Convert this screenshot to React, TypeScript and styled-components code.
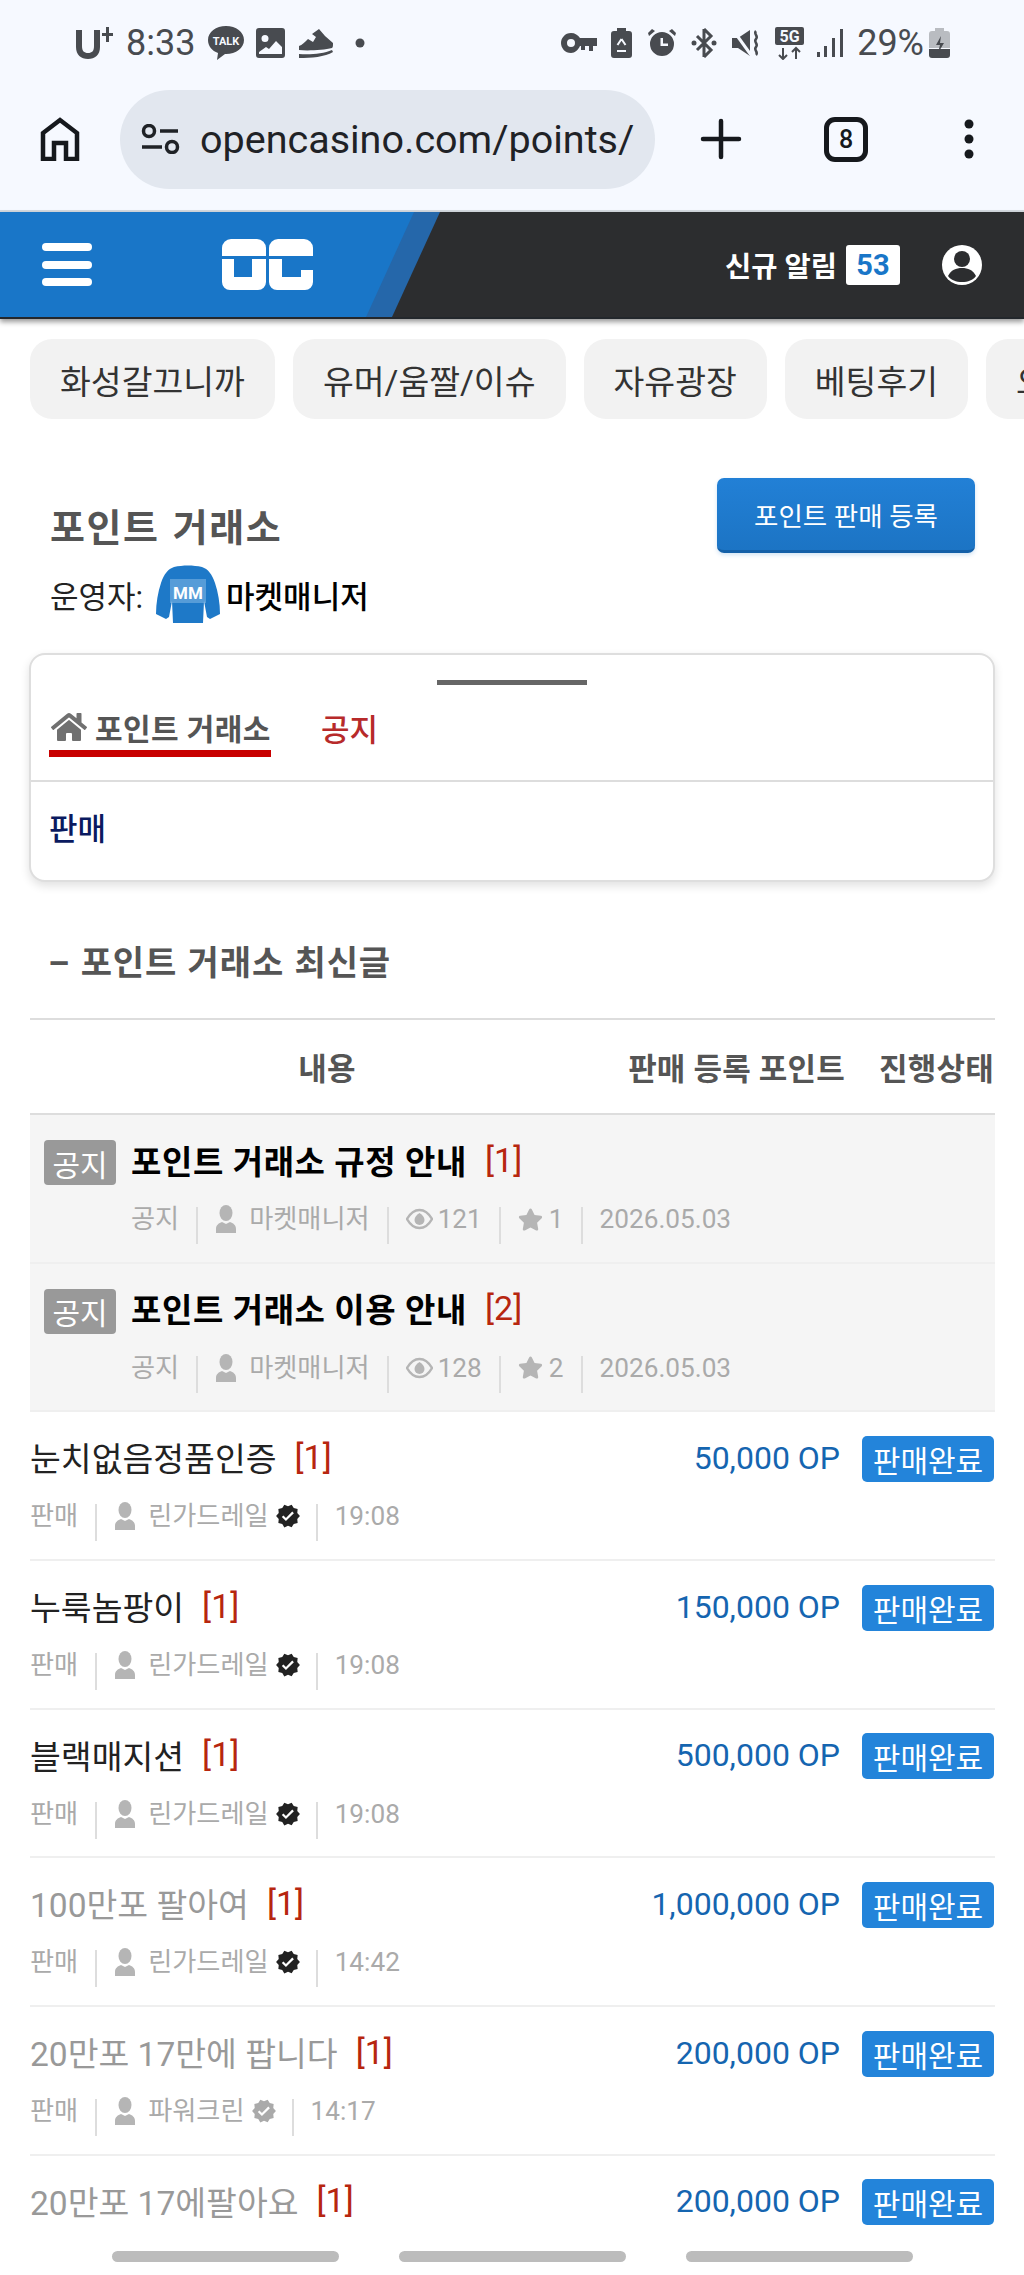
import React from "react";
import styled, { createGlobalStyle } from "styled-components";
import { FaHome, FaStar } from "react-icons/fa";
import { MdVerified } from "react-icons/md";

const GlobalStyle = createGlobalStyle`
  html, body { margin: 0; padding: 0; background: #fff; }
  * { box-sizing: border-box; }
  body { font-family: Roboto, "Noto Sans CJK KR", sans-serif; }
`;

const Page = styled.div`
  position: relative;
  width: 1024px;
  height: 2275px;
  overflow: hidden;
  background: #fff;
`;

const Chrome = styled.div`
  height: 212px;
  background: #f6f9ff;
  border-bottom: 2px solid #d5dae0;
`;

const StatusBar = styled.div`
  height: 86px;
  display: flex;
  justify-content: space-between;
  align-items: center;
  padding: 0 74px 0 76px;
  color: #484b50;
`;

const StatusGroup = styled.div`
  display: flex;
  align-items: center;
`;

const StatusText = styled.span<{ $left: number }>`
  font-size: 36px;
  line-height: 40px;
  margin-left: ${(p) => p.$left}px;
  color: #484b50;
`;

const StatusIcon = styled.svg<{ $left: number }>`
  display: block;
  margin-left: ${(p) => p.$left}px;
  fill: #484b50;
  flex: none;
`;

const Toolbar = styled.div`
  height: 114px;
  display: flex;
  align-items: center;
  padding: 0 0 0 40px;
  margin-top: -4px;
`;

const UrlPill = styled.div`
  width: 535px;
  height: 99px;
  margin-left: 40px;
  border-radius: 50px;
  background: #e2e7ef;
  display: flex;
  align-items: center;
  padding-left: 21px;
  gap: 20px;
  color: #1f2226;
  font-size: 39.5px;
`;

const ToolIcon = styled.svg<{ $left: number }>`
  display: block;
  margin-left: ${(p) => p.$left}px;
  flex: none;
`;

const TabCount = styled.div`
  width: 44px;
  height: 45px;
  margin-left: 82px;
  border: 5px solid #16191d;
  border-radius: 11px;
  display: flex;
  align-items: center;
  justify-content: center;
  font-size: 25px;
  font-weight: 500;
  color: #16191d;
`;

const Header = styled.header`
  position: relative;
  height: 107px;
  background: #2c2d2f;
  border-bottom: 2px solid #23272c;
  box-shadow: 0 3px 5px rgba(0, 0, 0, 0.4);
  display: flex;
  align-items: center;
  padding: 0 42px;
  &::before {
    content: "";
    position: absolute;
    inset: 0 auto 0 0;
    width: 440px;
    background: #2567aa;
    clip-path: polygon(0 0, 100% 0, 392px 100%, 0 100%);
  }
  &::after {
    content: "";
    position: absolute;
    inset: 0 auto 0 0;
    width: 414px;
    background: #1976c8;
    clip-path: polygon(0 0, 100% 0, 366px 100%, 0 100%);
  }
`;

const HeaderLeft = styled.div`
  position: relative;
  z-index: 1;
  display: flex;
  align-items: center;
  gap: 130px;
`;

const Burger = styled.div`
  width: 50px;
  display: flex;
  flex-direction: column;
  gap: 9.5px;
  & > span {
    display: block;
    height: 8px;
    border-radius: 4px;
    background: #fff;
  }
`;

const HeaderRight = styled.div`
  margin-left: auto;
  display: flex;
  align-items: center;
`;

const AlertLabel = styled.span`
  color: #fff;
  font-size: 28.5px;
  font-weight: 700;
`;

const AlertBadge = styled.span`
  width: 54px;
  height: 40px;
  margin-left: 9px;
  border-radius: 3px;
  background: #fff;
  color: #1976c8;
  font-size: 29px;
  font-weight: 700;
  display: flex;
  align-items: center;
  justify-content: center;
`;

const ChipRow = styled.nav`
  display: flex;
  gap: 18px;
  padding: 20px 0 0 30px;
  overflow: hidden;
`;

const Chip = styled.a`
  flex: none;
  height: 80px;
  padding: 0 30px;
  border-radius: 22px;
  background: #f2f2f2;
  color: #333;
  font-size: 33.5px;
  display: flex;
  align-items: center;
`;

const PageHead = styled.section`
  display: flex;
  justify-content: space-between;
  align-items: flex-start;
  padding: 59px 49px 0 50px;
`;

const HeadInfo = styled.div`
  padding-top: 25px;
`;

const PageTitle = styled.h1`
  margin: 0;
  font-size: 38px;
  line-height: 50px;
  font-weight: 700;
  color: #555;
  letter-spacing: 1.6px;
  word-spacing: 2px;
`;

const Operator = styled.div`
  display: flex;
  align-items: center;
  height: 60px;
  margin-top: 11px;
  font-size: 31px;
  color: #222;
`;

const OperatorName = styled.span`
  margin-left: 6px;
  font-size: 31px;
  font-weight: 500;
  color: #000;
`;

const PrimaryButton = styled.button`
  width: 258px;
  height: 75px;
  border: 0;
  border-bottom: 3px solid #1460a8;
  border-radius: 7px;
  background: linear-gradient(#2280d6, #1c74c4);
  box-shadow: 0 2px 4px rgba(30, 120, 200, 0.2);
  color: #fff;
  font-family: inherit;
  font-size: 26.5px;
`;

const BoardCard = styled.section`
  margin: 29px 29px 0;
  height: 229px;
  border: 2px solid #dedede;
  border-radius: 16px;
  background: #fff;
  box-shadow: 0 4px 10px rgba(0, 0, 0, 0.12);
`;

const Handle = styled.div`
  width: 150px;
  height: 5px;
  margin: 25px auto 0;
  background: #666;
`;

const CardTabs = styled.div`
  height: 97px;
  display: flex;
  align-items: flex-start;
  gap: 50px;
  padding: 19px 0 0 18px;
  border-bottom: 2px solid #ddd;
`;

const HomeTab = styled.div`
  width: 222px;
  height: 54px;
  padding: 0 0 0 2px;
  display: flex;
  align-items: center;
  gap: 8px;
  margin-top: -1px;
  border-bottom: 7px solid #c80000;
  color: #555;
  font-size: 30px;
  font-weight: 700;
  letter-spacing: 0.4px;
  white-space: nowrap;
  svg { flex: none; color: #707070; }
`;

const NoticeTab = styled.div`
  height: 46px;
  display: flex;
  align-items: center;
  color: #b72a2a;
  font-size: 31px;
  font-weight: 500;
`;

const SubMenu = styled.div`
  padding: 28px 0 0 18px;
  color: #0a1a60;
  font-size: 31px;
  line-height: 40px;
  font-weight: 500;
`;

const SectionHeading = styled.h2`
  margin: 0;
  padding: 58px 0 0 48px;
  height: 136px;
  font-size: 34px;
  line-height: 46px;
  font-weight: 700;
  color: #555;
  letter-spacing: 0.9px;
  word-spacing: 1px;
`;

const Board = styled.div`
  margin: 0 29px 0 30px;
  border-top: 2px solid #ddd;
`;

const TableHead = styled.div`
  height: 95px;
  display: grid;
  grid-template-columns: 594px 221px 1fr;
  align-items: center;
  border-bottom: 2px solid #ddd;
  color: #555;
  font-size: 31px;
  font-weight: 700;
  letter-spacing: 0.2px;
  white-space: nowrap;
  & > span:first-child { text-align: center; }
  & > span:nth-child(2) { text-align: right; }
  & > span:last-child { text-align: right; padding-right: 1px; }
`;

const Row = styled.article<{ $notice?: boolean }>`
  height: 148.7px;
  padding-top: ${(p) => (p.$notice ? 25 : 24)}px;
  border-bottom: 2px solid #efefef;
  background: ${(p) => (p.$notice ? "#f5f5f5" : "#fff")};
`;

const TopLine = styled.div<{ $notice?: boolean }>`
  height: 45px;
  display: flex;
  align-items: center;
  padding-left: ${(p) => (p.$notice ? 14 : 0)}px;
`;

const NoticeLabel = styled.span`
  width: 72px;
  height: 45px;
  margin-right: 15px;
  border-radius: 4px;
  background: #999;
  color: #fff;
  font-size: 30px;
  display: flex;
  align-items: center;
  justify-content: center;
`;

const RowTitle = styled.span<{ $notice?: boolean; $read?: boolean }>`
  margin-top: ${(p) => (p.$notice ? -6 : -4)}px;
  font-size: ${(p) => (p.$notice ? 33 : 33.5)}px;
  font-weight: ${(p) => (p.$notice ? 700 : 400)};
  color: ${(p) => (p.$notice ? "#000" : p.$read ? "#999" : "#222")};
  letter-spacing: ${(p) => (p.$notice ? 0.6 : 0)}px;
`;

const ReplyCount = styled.span<{ $notice?: boolean }>`
  margin-top: ${(p) => (p.$notice ? -6 : -4)}px;
  margin-left: 18px;
  color: #b7260f;
  font-size: 34px;
`;

const Sale = styled.div`
  margin-left: auto;
  display: flex;
  align-items: center;
  gap: 22px;
  padding-right: 1px;
`;

const Price = styled.span`
  margin-top: -2px;
  color: #1565b0;
  font-size: 32px;
`;

const SoldBadge = styled.span`
  width: 132px;
  height: 46px;
  border-radius: 5px;
  background: #2384da;
  color: #fff;
  font-size: 30px;
  display: flex;
  align-items: center;
  justify-content: center;
`;

const Meta = styled.div<{ $notice?: boolean }>`
  height: 37px;
  margin-top: ${(p) => (p.$notice ? 22 : 23)}px;
  padding-left: ${(p) => (p.$notice ? 101 : 0)}px;
  display: flex;
  align-items: flex-start;
  color: #aaa;
  font-size: 26.2px;
`;

const MetaText = styled.span`
  line-height: 30px;
  margin-top: -3px;
  white-space: nowrap;
`;

const MetaSep = styled.i`
  display: block;
  width: 2px;
  height: 37px;
  margin: 0 17px 0 17px;
  background: #ddd;
`;

const MetaIconWrap = styled.span<{ $gap: number }>`
  display: flex;
  margin-top: -3px;
  margin-right: ${(p) => p.$gap}px;
  height: 30px;
  align-items: center;
  color: #b5b5b5;
`;

const VerifiedMark = styled.span<{ $tone: string }>`
  display: flex;
  height: 30px;
  margin: -3px -2px 0 6px;
  align-items: center;
  color: ${(p) => p.$tone};
`;

const BottomStrip = styled.div`
  position: absolute;
  left: 0;
  right: 0;
  bottom: 0;
  height: 43px;
  padding: 19px 0 0 112px;
  background: #fff;
  display: flex;
  gap: 60px;
  & > span {
    display: block;
    width: 227px;
    height: 11px;
    border-radius: 6px;
    background: #bcbcbc;
  }
`;

function PersonIcon() {
  return (
    <svg width="22" height="28" viewBox="0 0 22 28" fill="#b5b5b5">
      <ellipse cx="11" cy="8" rx="6.5" ry="8" />
      <path d="M1 28v-4c0-4 3-6 6-7l4 2 4-2c3 1 6 3 6 7v4z" />
    </svg>
  );
}

function EyeIcon() {
  return (
    <svg width="27" height="22" viewBox="0 0 27 22" fill="none" stroke="#b5b5b5">
      <path d="M1 11C5 4 9 2 13.500 2S22 4 26 11C22 18 18 20 13.500 20S5 18 1 11z" strokeWidth="2.400" />
      <path d="M13.500 5c3 2 5 4 5 7a5 5 0 0 1-10 0c0-3 2-5 5-7z" fill="#b5b5b5" stroke="none" />
    </svg>
  );
}

function Jersey() {
  return (
    <svg width="64" height="58" viewBox="0 0 64 58" style={{ margin: "0 0 0 13px", flex: "none" }}>
      <path
        d="M18 2c9-2 19-2 28 0 6 2 10 7 13 16 3 9 5 20 5 31l-10 5-3-2-3-16-1 22H17l-1-22-3 16-3 2-10-5C0 38 2 27 5 18 8 9 12 4 18 2z"
        fill="#1e79c8"
      />
      <rect x="14" y="14" width="36" height="24" fill="#9cc8ec" opacity="0.45" />
      <text x="32" y="34" textAnchor="middle" fontFamily="Roboto" fontWeight="700" fontSize="17" fill="#fff">
        MM
      </text>
    </svg>
  );
}

function OcLogo() {
  return (
    <svg width="91" height="51" viewBox="0 0 91 51" fill="#fff" style={{ display: "block" }}>
      <path d="M0 17V9a9 9 0 0 1 9-9h26a9 9 0 0 1 9 9v8z" />
      <path d="M0 20h12v18h18V20h14v23a8 8 0 0 1-8 8H8a8 8 0 0 1-8-8z" />
      <path d="M47 17V9a9 9 0 0 1 9-9h26a9 9 0 0 1 9 9v8z" />
      <path d="M47 20h13v18h19v-7h12v12a8 8 0 0 1-8 8H55a8 8 0 0 1-8-8z" />
    </svg>
  );
}

function StatusLeft() {
  return (
    <StatusGroup>
      <StatusIcon $left={0} width="37" height="32" viewBox="0 0 37 32">
        <path d="M0 3h6v16c0 5 2 7 6 7s6-2 6-7V3h6v17c0 8-5 12-12 12S0 28 0 20z" />
        <path d="M26 6h4V0h3v6h4v3h-4v6h-3V9h-4z" />
      </StatusIcon>
      <StatusText $left={13}>8:33</StatusText>
      <StatusIcon $left={13} width="36" height="34" viewBox="0 0 36 34">
        <path d="M18 0c10 0 18 6 18 14s-8 14-18 14h-1l-8 6 1-7C4 25 0 20 0 14 0 6 8 0 18 0z" />
        <text x="18" y="19" textAnchor="middle" fontFamily="Roboto" fontWeight="700" fontSize="11" fill="#f6f9ff">
          TALK
        </text>
      </StatusIcon>
      <StatusIcon $left={12} width="29" height="30" viewBox="0 0 29 30">
        <path fillRule="evenodd" d="M3 0h23a3 3 0 0 1 3 3v24a3 3 0 0 1-3 3H3a3 3 0 0 1-3-3V3a3 3 0 0 1 3-3zm6 7a3.500 3.500 0 1 0 0 7 3.500 3.500 0 0 0 0-7zm-6 19h23v-7l-6-6-7 8-3-2-7 5z" />
      </StatusIcon>
      <StatusIcon $left={13} width="35" height="29" viewBox="0 0 35 29">
        <path d="M1 17c3-1 6-4 9-7l5 3 3-5-4-3 7-5 6 7 8 7c0 3 0 4-1 5-8 2-24 3-33 2z" />
        <path d="M1 25c10 1 24 0 33-4l1 2c-8 5-22 6-34 6z" />
      </StatusIcon>
      <StatusIcon $left={22} width="10" height="10" viewBox="0 0 10 10">
        <circle cx="5" cy="5" r="4.500" />
      </StatusIcon>
    </StatusGroup>
  );
}

function StatusRight() {
  return (
    <StatusGroup>
      <StatusIcon width="36" height="20" $left={0} viewBox="0 0 36 20">
        <path fillRule="evenodd" d="M10 0c4 0 7 2 9 5h17v8h-4v5h-4v-5h-4v4h-4v-4h-1c-2 4-5 7-9 7C4 20 0 15 0 10S4 0 10 0zm0 6a4 4 0 1 0 0 8 4 4 0 0 0 0-8z" />
      </StatusIcon>
      <StatusIcon width="21" height="30" $left={14} viewBox="0 0 21 30">
        <path d="M6 0h9v3h3a3 3 0 0 1 3 3v21a3 3 0 0 1-3 3H3a3 3 0 0 1-3-3V6a3 3 0 0 1 3-3h3z" />
        <path d="M10.500 11l-4 6M10.500 11l4 6M6 23h9" fill="none" stroke="#f6f9ff" strokeWidth="2" />
      </StatusIcon>
      <StatusIcon width="28" height="28" $left={16} viewBox="0 0 28 28">
        <path fillRule="evenodd" d="M14 3a12 12 0 1 1 0 24 12 12 0 0 1 0-24zm-1.500 6v8H20v-2.500h-5V9z" />
        <path d="M4 0l3 2-6 5-1-3zM24 0l4 4-1 3-6-5z" />
      </StatusIcon>
      <StatusIcon width="26" height="30" $left={15} viewBox="0 0 26 30">
        <path d="M13 1l7 7-14 14M13 29l7-7L6 8M13 1v28" fill="none" stroke="#484b50" strokeWidth="3" />
        <circle cx="3" cy="15" r="2.500" />
        <circle cx="23" cy="15" r="2.500" />
      </StatusIcon>
      <StatusIcon width="29" height="28" $left={15} viewBox="0 0 29 28">
        <path d="M0 9h6l12-8v26L6 19H0z" />
        <path d="M1 1l18 25" stroke="#f6f9ff" strokeWidth="3" />
        <path d="M24 2c-3 3 3 5 0 8s3 5 0 8 3 5 0 8" fill="none" stroke="#484b50" strokeWidth="2.500" />
      </StatusIcon>
      <StatusIcon width="29" height="33" $left={14} viewBox="0 0 29 33">
        <rect width="29" height="18" rx="2" />
        <text x="14.500" y="15" textAnchor="middle" fontFamily="Roboto" fontWeight="700" fontSize="16" fill="#f6f9ff">
          5G
        </text>
        <path d="M8 21v11M4 28l4 4 4-4M21 32V21M17 25l4-4 4 4" fill="none" stroke="#484b50" strokeWidth="2" />
      </StatusIcon>
      <StatusIcon width="26" height="28" $left={13} viewBox="0 0 26 28">
        <rect x="0" y="23" width="3" height="5" />
        <rect x="7" y="17" width="3" height="11" />
        <rect x="15" y="9" width="3" height="19" />
        <rect x="23" y="0" width="3" height="28" />
      </StatusIcon>
      <StatusText $left={14}>29%</StatusText>
      <StatusIcon width="21" height="30" $left={5} viewBox="0 0 21 30">
        <path d="M6 0h9v3h3a3 3 0 0 1 3 3v14H0V6a3 3 0 0 1 3-3h3z" fill="#b9bcc1" />
        <path d="M0 21h21v6a3 3 0 0 1-3 3H3a3 3 0 0 1-3-3z" />
        <path d="M12 8l-5 9h4l-2 8 6-10h-4z" />
      </StatusIcon>
    </StatusGroup>
  );
}

function BrowserBar() {
  return (
    <Toolbar>
      <ToolIcon $left={0} width="40" height="44" viewBox="0 0 40 44" fill="none" stroke="#16191d" strokeWidth="4.500">
        <path d="M3 42V16L20 3l17 13v26H26V26H14v16z" strokeLinejoin="miter" />
      </ToolIcon>
      <UrlPill>
        <svg width="39" height="30" viewBox="0 0 39 30" fill="none" stroke="#1f2226" strokeWidth="3.500" style={{ flex: "none" }}>
          <circle cx="8" cy="7" r="5.500" />
          <path d="M19 7h18M1 23h20" />
          <circle cx="31" cy="23" r="5.500" />
        </svg>
        <span>opencasino.com/points/</span>
      </UrlPill>
      <ToolIcon $left={45} width="42" height="42" viewBox="0 0 42 42" stroke="#16191d" strokeWidth="4.500" strokeLinecap="round">
        <path d="M21 3v36M3 21h36" />
      </ToolIcon>
      <TabCount>8</TabCount>
      <ToolIcon $left={93} width="16" height="40" viewBox="0 0 16 40" fill="#16191d">
        <circle cx="8" cy="5" r="4.500" />
        <circle cx="8" cy="20" r="4.500" />
        <circle cx="8" cy="35" r="4.500" />
      </ToolIcon>
    </Toolbar>
  );
}

type Post = {
  title: string;
  replies: number;
  price: string;
  author: string;
  tone: string;
  time: string;
  read?: boolean;
};

const notices = [
  { title: "포인트 거래소 규정 안내", replies: 1, views: 121, stars: 1 },
  { title: "포인트 거래소 이용 안내", replies: 2, views: 128, stars: 2 },
];

const posts: Post[] = [
  { title: "눈치없음정품인증", replies: 1, price: "50,000 OP", author: "린가드레일", tone: "#222", time: "19:08" },
  { title: "누룩놈팡이", replies: 1, price: "150,000 OP", author: "린가드레일", tone: "#222", time: "19:08" },
  { title: "블랙매지션", replies: 1, price: "500,000 OP", author: "린가드레일", tone: "#222", time: "19:08" },
  { title: "100만포 팔아여", replies: 1, price: "1,000,000 OP", author: "린가드레일", tone: "#222", time: "14:42", read: true },
  { title: "20만포 17만에 팝니다", replies: 1, price: "200,000 OP", author: "파워크린", tone: "#aaa", time: "14:17", read: true },
  { title: "20만포 17에팔아요", replies: 1, price: "200,000 OP", author: "파워크린", tone: "#aaa", time: "14:10", read: true },
];

export default function App() {
  return (
    <Page>
      <GlobalStyle />
      <Chrome>
        <StatusBar>
          <StatusLeft />
          <StatusRight />
        </StatusBar>
        <BrowserBar />
      </Chrome>

      <Header>
        <HeaderLeft>
          <Burger>
            <span />
            <span />
            <span />
          </Burger>
          <OcLogo />
        </HeaderLeft>
        <HeaderRight>
          <AlertLabel>신규 알림</AlertLabel>
          <AlertBadge>53</AlertBadge>
          <svg width="40" height="40" viewBox="0 0 40 40" style={{ marginLeft: 42 }}>
            <circle cx="20" cy="20" r="20" fill="#fff" />
            <circle cx="20" cy="14" r="8" fill="#2c2d2f" />
            <path d="M6 31c3-6 8-8 14-8s11 2 14 8c-3 4-8 6-14 6S9 35 6 31z" fill="#2c2d2f" />
          </svg>
        </HeaderRight>
      </Header>

      <ChipRow>
        <Chip>화성갈끄니까</Chip>
        <Chip>유머/움짤/이슈</Chip>
        <Chip>자유광장</Chip>
        <Chip>베팅후기</Chip>
        <Chip>오늘의 픽</Chip>
      </ChipRow>

      <PageHead>
        <HeadInfo>
          <PageTitle>포인트 거래소</PageTitle>
          <Operator>
            운영자:
            <Jersey />
            <OperatorName>마켓매니저</OperatorName>
          </Operator>
        </HeadInfo>
        <PrimaryButton>포인트 판매 등록</PrimaryButton>
      </PageHead>

      <BoardCard>
        <Handle />
        <CardTabs>
          <HomeTab>
            <FaHome size={36} />
            포인트 거래소
          </HomeTab>
          <NoticeTab>공지</NoticeTab>
        </CardTabs>
        <SubMenu>판매</SubMenu>
      </BoardCard>

      <SectionHeading>– 포인트 거래소 최신글</SectionHeading>

      <Board>
        <TableHead>
          <span>내용</span>
          <span>판매 등록 포인트</span>
          <span>진행상태</span>
        </TableHead>

        {notices.map((n) => (
          <Row key={n.title} $notice>
            <TopLine $notice>
              <NoticeLabel>공지</NoticeLabel>
              <RowTitle $notice>{n.title}</RowTitle>
              <ReplyCount $notice>[{n.replies}]</ReplyCount>
            </TopLine>
            <Meta $notice>
              <MetaText>공지</MetaText>
              <MetaSep />
              <MetaIconWrap $gap={12}>
                <PersonIcon />
              </MetaIconWrap>
              <MetaText>마켓매니저</MetaText>
              <MetaSep />
              <MetaIconWrap $gap={5}>
                <EyeIcon />
              </MetaIconWrap>
              <MetaText>{n.views}</MetaText>
              <MetaSep />
              <MetaIconWrap $gap={6}>
                <FaStar size={25} />
              </MetaIconWrap>
              <MetaText>{n.stars}</MetaText>
              <MetaSep />
              <MetaText>2026.05.03</MetaText>
            </Meta>
          </Row>
        ))}

        {posts.map((p, i) => (
          <Row key={i}>
            <TopLine>
              <RowTitle $read={p.read}>{p.title}</RowTitle>
              <ReplyCount>[{p.replies}]</ReplyCount>
              <Sale>
                <Price>{p.price}</Price>
                <SoldBadge>판매완료</SoldBadge>
              </Sale>
            </TopLine>
            <Meta>
              <MetaText>판매</MetaText>
              <MetaSep />
              <MetaIconWrap $gap={12}>
                <PersonIcon />
              </MetaIconWrap>
              <MetaText>{p.author}</MetaText>
              <VerifiedMark $tone={p.tone}>
                <MdVerified size={26} />
              </VerifiedMark>
              <MetaSep />
              <MetaText>{p.time}</MetaText>
            </Meta>
          </Row>
        ))}
      </Board>

      <BottomStrip>
        <span />
        <span />
        <span />
      </BottomStrip>
    </Page>
  );
}
